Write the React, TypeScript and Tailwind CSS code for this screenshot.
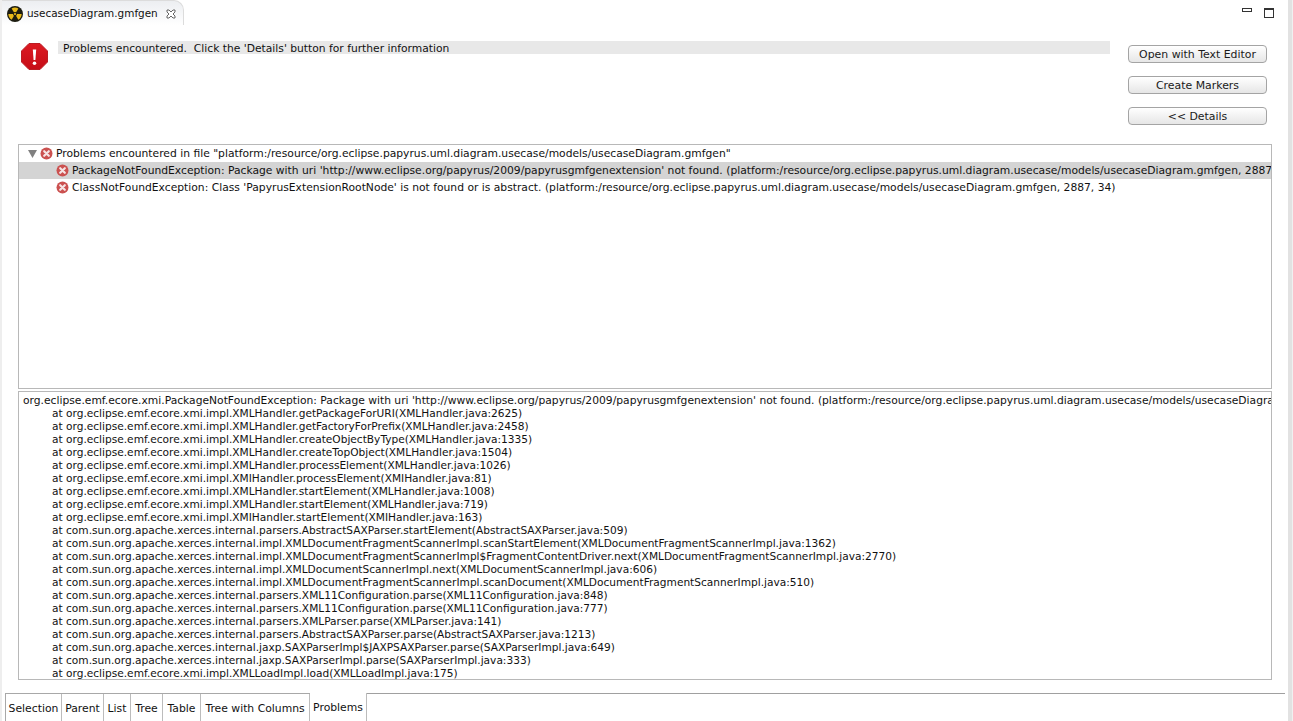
import React from 'react';

const FONT = "font-['DejaVu_Sans',sans-serif]";

const STACK_LINES = [
  'at org.eclipse.emf.ecore.xmi.impl.XMLHandler.getPackageForURI(XMLHandler.java:2625)',
  'at org.eclipse.emf.ecore.xmi.impl.XMLHandler.getFactoryForPrefix(XMLHandler.java:2458)',
  'at org.eclipse.emf.ecore.xmi.impl.XMLHandler.createObjectByType(XMLHandler.java:1335)',
  'at org.eclipse.emf.ecore.xmi.impl.XMLHandler.createTopObject(XMLHandler.java:1504)',
  'at org.eclipse.emf.ecore.xmi.impl.XMLHandler.processElement(XMLHandler.java:1026)',
  'at org.eclipse.emf.ecore.xmi.impl.XMIHandler.processElement(XMIHandler.java:81)',
  'at org.eclipse.emf.ecore.xmi.impl.XMLHandler.startElement(XMLHandler.java:1008)',
  'at org.eclipse.emf.ecore.xmi.impl.XMLHandler.startElement(XMLHandler.java:719)',
  'at org.eclipse.emf.ecore.xmi.impl.XMIHandler.startElement(XMIHandler.java:163)',
  'at com.sun.org.apache.xerces.internal.parsers.AbstractSAXParser.startElement(AbstractSAXParser.java:509)',
  'at com.sun.org.apache.xerces.internal.impl.XMLDocumentFragmentScannerImpl.scanStartElement(XMLDocumentFragmentScannerImpl.java:1362)',
  'at com.sun.org.apache.xerces.internal.impl.XMLDocumentFragmentScannerImpl$FragmentContentDriver.next(XMLDocumentFragmentScannerImpl.java:2770)',
  'at com.sun.org.apache.xerces.internal.impl.XMLDocumentScannerImpl.next(XMLDocumentScannerImpl.java:606)',
  'at com.sun.org.apache.xerces.internal.impl.XMLDocumentFragmentScannerImpl.scanDocument(XMLDocumentFragmentScannerImpl.java:510)',
  'at com.sun.org.apache.xerces.internal.parsers.XML11Configuration.parse(XML11Configuration.java:848)',
  'at com.sun.org.apache.xerces.internal.parsers.XML11Configuration.parse(XML11Configuration.java:777)',
  'at com.sun.org.apache.xerces.internal.parsers.XMLParser.parse(XMLParser.java:141)',
  'at com.sun.org.apache.xerces.internal.parsers.AbstractSAXParser.parse(AbstractSAXParser.java:1213)',
  'at com.sun.org.apache.xerces.internal.jaxp.SAXParserImpl$JAXPSAXParser.parse(SAXParserImpl.java:649)',
  'at com.sun.org.apache.xerces.internal.jaxp.SAXParserImpl.parse(SAXParserImpl.java:333)',
  'at org.eclipse.emf.ecore.xmi.impl.XMLLoadImpl.load(XMLLoadImpl.java:175)',
];

const BOTTOM_TABS = [
  { label: 'Selection', width: 'w-[56px]' },
  { label: 'Parent', width: 'w-[42px]' },
  { label: 'List', width: 'w-[27px]' },
  { label: 'Tree', width: 'w-[32px]' },
  { label: 'Table', width: 'w-[38px]' },
  { label: 'Tree with Columns', width: 'w-[109px]' },
];

function ErrorDot() {
  return (
    <svg width="13" height="13" viewBox="0 0 13 13" className="shrink-0">
      <circle cx="6.5" cy="6.5" r="6" fill="#cb5150" />
      <path d="M4.2 4.2l4.6 4.6M8.8 4.2l-4.6 4.6" stroke="#f6e4e4" strokeWidth="2.2" strokeLinecap="round" />
    </svg>
  );
}

function RadiationIcon() {
  return (
    <svg width="16" height="16" viewBox="0 0 16 16" className="shrink-0">
      <circle cx="8" cy="8" r="8" fill="#1c1c10" />
      <path d="M8 8L4.6 2.4A6.6 6.6 0 0 1 11.4 2.4Z" fill="#e8b818" />
      <path d="M8 8h6.6A6.6 6.6 0 0 1 11.3 13.7Z" fill="#e8b818" />
      <path d="M8 8H1.4A6.6 6.6 0 0 0 4.7 13.7Z" fill="#e8b818" />
      <circle cx="8" cy="8" r="2" fill="#1c1c10" />
      <circle cx="8" cy="8" r="1.1" fill="#e8b818" />
    </svg>
  );
}

function StopIcon() {
  return (
    <svg width="27" height="27" viewBox="0 0 27 27" className="shrink-0">
      <defs>
        <linearGradient id="stopFill" x1="0" y1="0" x2="0" y2="1">
          <stop offset="0" stopColor="#dc1a22" />
          <stop offset="1" stopColor="#c60d17" />
        </linearGradient>
      </defs>
      <path d="M8 .5h11L26.500 8v11L19 26.500H8L.5 19V8Z" fill="url(#stopFill)" stroke="#bb1d24" />
      <path d="M11.800 6.500h3.400l-.8 10.500h-1.800Z" fill="#fff" />
      <circle cx="13.500" cy="20.300" r="1.800" fill="#fff" />
    </svg>
  );
}

function PushButton({ label }: { label: string }) {
  return (
    <button className="h-[18px] w-[139px] rounded-[4px] border border-[#a4a4a4] bg-gradient-to-b from-[#ffffff] to-[#e6e6e6] text-[10.9px] leading-[15px] text-[#1a1a1a]">
      {label}
    </button>
  );
}

export default function App() {
  return (
    <div className={`${FONT} flex h-[721px] w-[1293px] overflow-hidden bg-[#eeeeee] text-[10.6px] text-[#111]`}>
      <div className="ml-[2px] flex min-w-0 flex-1 flex-col rounded-t-md bg-white">
        {/* editor tab strip */}
        <div className="flex h-[25px] shrink-0 items-start justify-between bg-white">
          <div className="flex h-[25px] w-[182px] items-center gap-[4px] rounded-tr-[10px] border-r border-t border-[#dcdcdc] bg-gradient-to-b from-[#eceef1] to-white pl-[5px] pt-[2px]">
            <RadiationIcon />
            <span className="w-[135px] text-[10.45px]">usecaseDiagram.gmfgen</span>
            <svg width="10" height="10" viewBox="0 0 10 10" className="shrink-0">
              <path d="M1 1h2l2 2 2-2h2v2L7 5l2 2v2H7L5 7 3 9H1V7l2-2-2-2Z" fill="#fff" stroke="#555" strokeWidth="0.9" />
            </svg>
          </div>
          <div className="flex gap-[12px] pr-[14px] pt-[8px]">
            <div className="h-[4px] w-[10px] border border-[#333]" />
            <div className="h-[10px] w-[10px] border border-t-2 border-[#333]" />
          </div>
        </div>

        {/* message + buttons */}
        <div className="flex h-[119px] shrink-0 pl-[19px]">
          <div className="pt-[18px]">
            <StopIcon />
          </div>
          <div className="ml-[10px] mt-[16px] h-[13px] w-[1052px] whitespace-pre bg-[#e8e8e8] pl-[5px] text-[10.72px] leading-[15px]">
            Problems encountered.  Click the 'Details' button for further information
          </div>
          <div className="ml-[18px] flex flex-col gap-[13px] pt-[20px]">
            <PushButton label="Open with Text Editor" />
            <PushButton label="Create Markers" />
            <PushButton label="<< Details" />
          </div>
        </div>

        {/* problem tree */}
        <div className="ml-[16px] mr-[16px] h-[245px] shrink-0 overflow-hidden border border-[#b8b8b8] bg-white text-[10.74px] leading-[17px]">
          <div className="flex h-[17px] items-center whitespace-pre">
            <svg width="9" height="8" viewBox="0 0 9 8" className="ml-[9px] mr-[3px] shrink-0">
              <path d="M0 0h9L4.500 8Z" fill="#808080" />
            </svg>
            <ErrorDot />
            <span className="ml-[3px]">Problems encountered in file "platform:/resource/org.eclipse.papyrus.uml.diagram.usecase/models/usecaseDiagram.gmfgen"</span>
          </div>
          <div className="flex h-[17px] items-center whitespace-pre bg-[#d4d4d4] pl-[37px]">
            <ErrorDot />
            <span className="ml-[3px]">PackageNotFoundException: Package with uri 'http://www.eclipse.org/papyrus/2009/papyrusgmfgenextension' not found. (platform:/resource/org.eclipse.papyrus.uml.diagram.usecase/models/usecaseDiagram.gmfgen, 2887, 34)</span>
          </div>
          <div className="flex h-[17px] items-center whitespace-pre pl-[37px]">
            <ErrorDot />
            <span className="ml-[3px]">ClassNotFoundException: Class 'PapyrusExtensionRootNode' is not found or is abstract. (platform:/resource/org.eclipse.papyrus.uml.diagram.usecase/models/usecaseDiagram.gmfgen, 2887, 34)</span>
          </div>
        </div>

        {/* stack trace */}
        <div className="ml-[16px] mr-[16px] mt-[2px] h-[289px] shrink-0 overflow-hidden whitespace-pre border border-[#b8b8b8] bg-white pl-[4px] pt-[2px] leading-[13px]">
          <div className="text-[10.72px]">org.eclipse.emf.ecore.xmi.PackageNotFoundException: Package with uri 'http://www.eclipse.org/papyrus/2009/papyrusgmfgenextension' not found. (platform:/resource/org.eclipse.papyrus.uml.diagram.usecase/models/usecaseDiagram.gmfgen, 2887, 34)</div>
          {STACK_LINES.map((line) => (
            <div key={line} className="pl-[29px]">{line}</div>
          ))}
        </div>

        {/* bottom page tabs */}
        <div className="ml-[3px] mr-[3px] mt-[13px] flex h-[28px] shrink-0 text-[10.8px]">
          <div className="flex border-l border-t border-[#a8a8a8]">
            {BOTTOM_TABS.map((tab) => (
              <div key={tab.label} className={`${tab.width} flex h-full items-center justify-center border-r border-[#bcbcbc] pt-[3px]`}>{tab.label}</div>
            ))}
          </div>
          <div className="flex h-full w-[57px] items-center justify-center border-r border-[#bcbcbc] pt-[3px]">Problems</div>
          <div className="flex-1 border-t border-[#a0a0a0]" />
        </div>
      </div>
      {/* sash on the right */}
      <div className="flex w-[5px] shrink-0">
        <div className="w-[4px] bg-[#e2e2e2]" />
        <div className="w-[1px] bg-[#f0f0f0]" />
      </div>
    </div>
  );
}
